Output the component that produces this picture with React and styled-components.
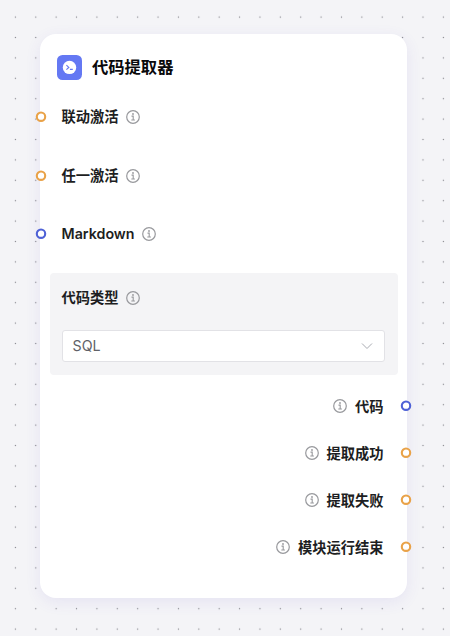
import React from "react";
import styled, { createGlobalStyle } from "styled-components";

const GlobalStyle = createGlobalStyle`
  * { box-sizing: border-box; }
  body {
    margin: 0;
    background: #f4f4f7;
    font-family: Inter, "Noto Sans CJK SC", sans-serif;
  }
`;

const Canvas = styled.main`
  position: relative;
  width: 450px;
  height: 636px;
  padding: 34px 43px 38px 40px;
  overflow: hidden;
  background: #f4f4f7;
`;

const DotGrid = styled.svg`
  position: absolute;
  inset: 0;
  width: 100%;
  height: 100%;
`;

const NodeCard = styled.section`
  position: relative;
  display: flex;
  flex-direction: column;
  height: 564px;
  border-radius: 16px;
  background: #fff;
  box-shadow: 0 4px 16px rgba(90, 70, 200, 0.09);
`;

const Header = styled.header`
  display: flex;
  align-items: center;
  gap: 10px;
  height: 54px;
  padding: 12px 17px 0;
`;

const AppIcon = styled.svg`
  width: 25px;
  height: 25px;
`;

const Title = styled.h1`
  margin: 0;
  color: #09090b;
  font-size: 16.3px;
  font-weight: 700;
  line-height: 24px;
`;

const Inputs = styled.div`
  display: flex;
  flex-direction: column;
  height: 175.5px;
`;

const Row = styled.div`
  position: relative;
  display: flex;
  align-items: center;
  justify-content: ${(p) => (p.$output ? "flex-end" : "flex-start")};
  gap: 7.5px;
  height: ${(p) => (p.$output ? "46.9px" : "58.6px")};
  padding: 0 23.5px 0 21.5px;
`;

const PortSvg = styled.svg`
  position: absolute;
  top: 50%;
  ${(p) => (p.$output ? "right: -5px;" : "left: -5px;")}
  width: 12px;
  height: 12px;
  margin-top: -6px;
  overflow: visible;
`;

const Label = styled.span`
  color: #1d1e22;
  font-size: 14.25px;
  font-weight: ${(p) => (p.$latin ? 600 : 700)};
  line-height: 20px;
  white-space: nowrap;
  padding-top: ${(p) => (p.$lowered ? "2px" : "0")};
`;

const InfoSvg = styled.svg`
  flex: none;
  width: 14px;
  height: 14px;
`;

const Panel = styled.div`
  display: flex;
  flex-direction: column;
  gap: 22px;
  height: 102px;
  margin: 9.5px 9px 0 9.5px;
  padding: 14.5px 13px 0 12px;
  border-radius: 4px;
  background: #f4f4f6;
`;

const PanelHeading = styled.div`
  display: flex;
  align-items: center;
  gap: 7.5px;
  height: 20px;
`;

const Select = styled.button`
  display: flex;
  align-items: center;
  justify-content: space-between;
  width: 100%;
  height: 32px;
  padding: 0 11px 0 10px;
  border: 1px solid #e2e2e6;
  border-radius: 3px;
  background: #fff;
  color: #606268;
  font-family: inherit;
  font-size: 14.25px;
`;

const Chevron = styled.svg`
  width: 12px;
  height: 8px;
`;

const Outputs = styled.div`
  display: flex;
  flex-direction: column;
  margin-top: 8px;
`;

function InfoIcon() {
  return (
    <InfoSvg viewBox="0 0 14 14" fill="none" stroke="#98999d">
      <circle cx="7" cy="7" r="6.3" strokeWidth="1.2" />
      <path d="M5.5 6.1H7.2V10M5.3 10H8.9" strokeWidth="1.1" />
      <circle cx="7" cy="4" r=".9" fill="#98999d" stroke="none" />
    </InfoSvg>
  );
}

function Port({ kind, output }) {
  return (
    <PortSvg $output={output} viewBox="0 0 12 12">
      <circle
        cx="6"
        cy="5.7"
        r="4.2"
        fill="#fff"
        stroke={kind === "data" ? "#4e61d6" : "#e9a248"}
        strokeWidth="2.1"
      />
    </PortSvg>
  );
}

const inputs = [
  { label: "联动激活", kind: "trigger" },
  { label: "任一激活", kind: "trigger" },
  { label: "Markdown", kind: "data", latin: true },
];

const outputs = [
  { label: "代码", kind: "data" },
  { label: "提取成功", kind: "trigger" },
  { label: "提取失败", kind: "trigger" },
  { label: "模块运行结束", kind: "trigger" },
];

export default function App() {
  return (
    <>
      <GlobalStyle />
      <Canvas>
        <DotGrid>
          <defs>
            <pattern id="dots" x="5.2" y="6.9" width="20.38" height="20.4" patternUnits="userSpaceOnUse">
              <circle cx="10.19" cy="10.2" r=".65" fill="#85858b" />
            </pattern>
          </defs>
          <rect width="100%" height="100%" fill="url(#dots)" />
        </DotGrid>
        <NodeCard>
          <Header>
            <AppIcon viewBox="0 0 25 25" fill="none">
              <rect width="25" height="25" rx="5.5" fill="#6478f3" />
              <circle cx="12.5" cy="12.4" r="6.7" fill="#fff" />
              <path d="M9.4 10.2L11.8 12.4L9.4 14.6M12.9 14.4H15.8" stroke="#6478f3" strokeWidth="1.15" />
            </AppIcon>
            <Title>代码提取器</Title>
          </Header>
          <Inputs>
            {inputs.map((item) => (
              <Row key={item.label}>
                <Port kind={item.kind} />
                <Label $latin={item.latin}>{item.label}</Label>
                <InfoIcon />
              </Row>
            ))}
          </Inputs>
          <Panel>
            <PanelHeading>
              <Label>代码类型</Label>
              <InfoIcon />
            </PanelHeading>
            <Select type="button">
              <span>SQL</span>
              <Chevron viewBox="0 0 12 8" fill="none" stroke="#a9abb2">
                <path d="M1 1.5L6 6.5L11 1.5" />
              </Chevron>
            </Select>
          </Panel>
          <Outputs>
            {outputs.map((item) => (
              <Row key={item.label} $output>
                <InfoIcon />
                <Label $lowered>{item.label}</Label>
                <Port kind={item.kind} output />
              </Row>
            ))}
          </Outputs>
        </NodeCard>
      </Canvas>
    </>
  );
}
